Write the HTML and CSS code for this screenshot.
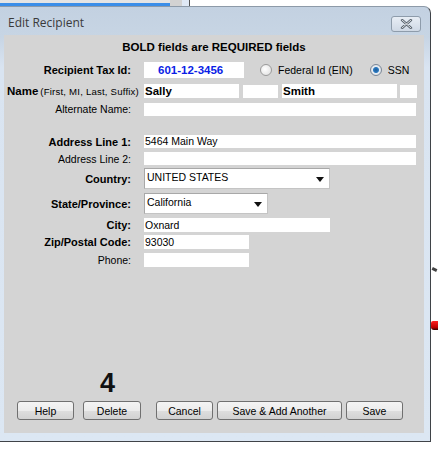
FILE: index.html
```html
<!DOCTYPE html>
<html>
<head>
<meta charset="utf-8">
<link rel="stylesheet" href="styles.css">
</head>
<body>
<div class="backdrop">
  <div class="bg-bar"><div class="bg-blue"></div></div>
  <div class="bg-scroll"></div>
  <div class="bg-edge"></div>
  <div class="bg-white"></div>
</div>
<div class="window">
  <div class="titlebar">
    <span class="title">Edit Recipient</span>
    <span class="close"><svg width="13" height="10" viewBox="0 0 13 10"><path d="M2 1 L11 9 M11 1 L2 9" stroke="#5a6570" stroke-width="2.4" stroke-linecap="round" fill="none"/><path d="M2 1 L11 9 M11 1 L2 9" stroke="#ffffff" stroke-width="0.8" stroke-linecap="round" fill="none"/></svg></span>
  </div>
  <div class="content">
    <div class="header">BOLD fields are REQUIRED fields</div>

    <div class="row r-tax">
      <label class="lbl bold">Recipient Tax Id:</label>
      <div class="field tax">601-12-3456</div>
      <span class="radio"></span><span class="rtext">Federal Id (EIN)</span>
      <span class="radio on"></span><span class="rtext">SSN</span>
    </div>

    <div class="row r-name">
      <label class="namelbl"><b>Name</b><span class="hint">(First, MI, Last, Suffix)</span></label>
      <div class="field strong w-first">Sally</div>
      <div class="field w-mi"></div>
      <div class="field strong w-last">Smith</div>
      <div class="field w-suf"></div>
    </div>

    <div class="row r-alt">
      <label class="lbl">Alternate Name:</label>
      <div class="field w-full"></div>
    </div>

    <div class="row r-a1">
      <label class="lbl bold">Address Line 1:</label>
      <div class="field w-full">5464 Main Way</div>
    </div>

    <div class="row r-a2">
      <label class="lbl">Address Line 2:</label>
      <div class="field w-full"></div>
    </div>

    <div class="row r-country">
      <label class="lbl bold">Country:</label>
      <div class="select w-country"><span>UNITED STATES</span><i class="arrow"></i></div>
    </div>

    <div class="row r-state">
      <label class="lbl bold">State/Province:</label>
      <div class="select w-state"><span>California</span><i class="arrow"></i></div>
    </div>

    <div class="row r-city">
      <label class="lbl bold">City:</label>
      <div class="field w-city">Oxnard</div>
    </div>

    <div class="row r-zip">
      <label class="lbl bold">Zip/Postal Code:</label>
      <div class="field w-zip">93030</div>
    </div>

    <div class="row r-phone">
      <label class="lbl">Phone:</label>
      <div class="field w-zip"></div>
    </div>

    <div class="count">4</div>

    <div class="buttons">
      <button class="btn b-help">Help</button>
      <button class="btn b-del">Delete</button>
      <button class="btn b-cancel">Cancel</button>
      <button class="btn b-add">Save &amp; Add Another</button>
      <button class="btn b-save">Save</button>
    </div>
  </div>
</div>
<span class="deco-dark"></span>
<span class="deco-red"></span>
</body>
</html>
```

FILE: styles.css
```css
html, body {
  margin: 0;
  padding: 0;
  background: #ffffff;
  width: 438px;
  height: 450px;
  overflow: hidden;
  position: relative;
  font-family: "Liberation Sans", Arial, sans-serif;
}

.backdrop {
  display: flex;
  height: 6px;
}
.bg-bar {
  width: 170px;
  background: #e4e4e4;
  display: flex;
  flex-direction: column;
  justify-content: flex-end;
}
.bg-blue {
  height: 3px;
  background: #3b8ee8;
}
.bg-scroll {
  width: 12px;
  background: #d2d2d2;
}
.bg-edge {
  width: 7px;
  background: #dfe8f4;
  border-right: 1px solid #555;
}
.bg-white {
  flex: 1;
  background: #fff;
}

.window {
  width: 431px;
  height: 436px;
  box-sizing: border-box;
  border-top: 1px solid #8d9aa8;
  border-right: 1px solid #3f4348;
  border-bottom: 1px solid #3f4348;
  border-top-right-radius: 7px;
  background: linear-gradient(#c3d1e1 0, #c7d5e4 30px, #d9e4f1 60px, #dce7f3 100%);
  display: flex;
  flex-direction: column;
}

.titlebar {
  height: 28px;
  display: flex;
  align-items: center;
  justify-content: space-between;
  padding: 0 9px 0 8px;
}
.title {
  font-family: "Open Sans", "Noto Sans", sans-serif;
  font-size: 12px;
  color: #3a3a3a;
  margin-top: 3px;
}
.close {
  width: 28px;
  height: 14px;
  border: 1px solid #8e9cab;
  border-radius: 3px;
  background: linear-gradient(#e8eef5, #cfd9e5);
  display: flex;
  align-items: center;
  justify-content: center;
  margin-top: 5px;
}

.content {
  margin: 0 6px 0 4px;
  height: 398px;
  background: #d4d4d4;
  display: flex;
  flex-direction: column;
  font-size: 10.5px;
  color: #000;
}

.header {
  height: 25px;
  line-height: 24px;
  text-align: center;
  font-weight: bold;
  font-size: 11.5px;
}

.row {
  display: flex;
  align-items: center;
}
.lbl {
  width: 127px;
  text-align: right;
  margin-right: 13px;
  font-size: 10.5px;
  flex: none;
}
.lbl.bold {
  font-weight: bold;
  font-size: 11px;
}
.namelbl {
  width: 137px;
  padding-left: 3px;
  flex: none;
  white-space: nowrap;
}
.namelbl b {
  font-size: 11.5px;
}
.hint {
  font-size: 9.6px;
  letter-spacing: 0.2px;
  margin-left: 2px;
}

.field {
  background: #fff;
  height: 13px;
  line-height: 13px;
  padding-left: 1px;
  box-sizing: border-box;
  font-size: 10.5px;
  flex: none;
  white-space: nowrap;
}
.field.strong {
  font-weight: bold;
  font-size: 11.5px;
  height: 14px;
  line-height: 14px;
}
.tax {
  width: 100px;
  height: 16px;
  line-height: 16px;
  color: #0a1ee6;
  font-weight: bold;
  font-size: 11.5px;
  padding-left: 14px;
}

.radio {
  width: 10px;
  height: 10px;
  border-radius: 50%;
  border: 1px solid #9a9a9a;
  background: radial-gradient(circle at 40% 40%, #ffffff, #dcdcdc);
  margin-left: 16px;
  margin-right: 6px;
  flex: none;
}
.radio.on {
  margin-left: 17px;
  background: radial-gradient(circle at 50% 50%, #1c5c98 0, #2b79c0 2.5px, #e8edf2 3.5px, #cfd5dc 100%);
  border-color: #7a8696;
}
.rtext {
  font-size: 10.5px;
}

.r-tax { height: 20px; }
.r-name { margin-top: 1px; height: 20px; }
.r-alt { height: 16px; }
.r-a1 { margin-top: 17px; height: 15px; }
.r-a2 { margin-top: 2px; height: 15px; }
.r-country { margin-top: 1px; height: 23px; }
.r-state { margin-top: 2px; height: 23px; }
.r-city { margin-top: 2px; height: 16px; }
.r-zip { margin-top: 1px; height: 16px; }
.r-phone { margin-top: 2px; height: 16px; }

.r-city .field, .r-zip .field, .r-phone .field { height: 14px; line-height: 14px; }

.w-first { width: 95px; }
.w-mi { width: 35px; margin-left: 4px; }
.w-last { width: 115px; margin-left: 4px; }
.w-suf { width: 17px; margin-left: 3px; }
.w-full { width: 272px; }
.w-city { width: 186px; }
.w-zip { width: 105px; }

.select {
  height: 21px;
  box-sizing: border-box;
  background: #fff;
  border: 1px solid #c4c4c4;
  border-top-color: #a8a8a8;
  border-left-color: #a8a8a8;
  display: flex;
  align-items: center;
  justify-content: space-between;
  padding: 0 4px 0 2px;
  font-size: 10.5px;
  flex: none;
}
.select span {
  margin-top: -3px;
}
.w-country { width: 186px; }
.w-state { width: 124px; }
.arrow {
  width: 0;
  height: 0;
  border-left: 4px solid transparent;
  border-right: 4px solid transparent;
  border-top: 5px solid #111;
  margin-right: 1px;
  margin-top: 1px;
}

.count {
  margin-top: auto;
  margin-left: 96px;
  font-weight: bold;
  font-size: 27px;
  line-height: 24px;
  color: #111;
}

.buttons {
  display: flex;
  height: 19px;
  margin-top: 6px;
  margin-bottom: 13px;
  padding-left: 13px;
}
.btn {
  height: 19px;
  box-sizing: border-box;
  border: 1px solid #707070;
  border-radius: 3px;
  background: linear-gradient(#f4f4f4 0, #ececec 50%, #dedede 51%, #d2d2d2 100%);
  font-family: "Liberation Sans", Arial, sans-serif;
  font-size: 10.5px;
  color: #000;
  padding: 0;
  flex: none;
}
.b-help { width: 57px; }
.b-del { width: 58px; margin-left: 9px; }
.b-cancel { width: 57px; margin-left: 15px; }
.b-add { width: 125px; margin-left: 4px; }
.b-save { width: 57px; margin-left: 4px; }

.deco-dark {
  position: absolute;
  left: 432px;
  top: 268px;
  width: 5px;
  height: 3px;
  background: #444;
  transform: rotate(25deg);
}
.deco-red {
  position: absolute;
  left: 431px;
  top: 321px;
  width: 7px;
  height: 9px;
  background: linear-gradient(#ff2020, #c00000 70%, #300000);
  border-radius: 2px 0 0 3px;
}
```
